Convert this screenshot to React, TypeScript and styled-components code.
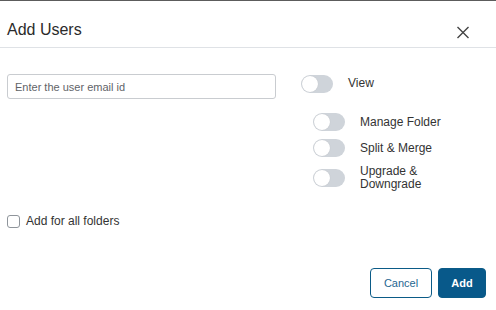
import React from "react";
import styled, { createGlobalStyle } from "styled-components";

const Global = createGlobalStyle`
  html, body { margin: 0; padding: 0; background: #fff; }
  body { font-family: "Liberation Sans", Arial, sans-serif; color: #333; }
  * { box-sizing: border-box; }
`;

const Modal = styled.div`
  width: 496px;
  height: 310px;
  border-top: 1px solid #5c5c5c;
  background: #fff;
  display: flex;
  flex-direction: column;
`;

const Header = styled.div`
  display: flex;
  align-items: flex-start;
  justify-content: space-between;
  padding: 19px 26px 7px 7px;
  border-bottom: 1px solid #dfe2e6;
`;

const Title = styled.h2`
  margin: 0;
  font-size: 16px;
  line-height: 20px;
  font-weight: 400;
  color: #2b2b2b;
`;

const CloseButton = styled.button`
  border: 0;
  background: none;
  padding: 0;
  margin-top: 6px;
  width: 14px;
  height: 13px;
  display: flex;
  cursor: pointer;
`;

const Body = styled.div`
  padding: 26px 10px 0 7px;
  display: flex;
  flex-direction: column;
`;

const TopRow = styled.div`
  display: flex;
  align-items: flex-start;
  gap: 25px;
`;

const EmailInput = styled.input`
  width: 269px;
  height: 25px;
  border: 1px solid #c9ccd0;
  border-radius: 3px;
  padding: 0 7px;
  font-family: inherit;
  font-size: 11px;
  color: #333;
  outline: none;
  &::placeholder { color: #5f6368; }
`;

const Permissions = styled.div`
  display: flex;
  flex-direction: column;
  margin-top: 1px;
`;

const SubList = styled.div`
  display: flex;
  flex-direction: column;
  gap: 8px;
  margin-top: 20px;
  padding-left: 12px;
`;

const ToggleRow = styled.label`
  display: flex;
  align-items: center;
  gap: 15px;
  min-height: 18px;
`;

const Track = styled.span`
  position: relative;
  flex: none;
  width: 32px;
  height: 18px;
  border-radius: 9px;
  background: #cfd4da;
`;

const Knob = styled.span`
  position: absolute;
  left: 1px;
  top: 1px;
  width: 16px;
  height: 16px;
  border-radius: 50%;
  background: #fff;
  box-shadow: 0 0 1px rgba(0, 0, 0, 0.15);
`;

const ToggleText = styled.span<{ $up?: boolean }>`
  font-size: 12px;
  line-height: 13px;
  color: #333;
  width: 90px;
  margin-top: ${(p) => (p.$up ? "-1px" : "0")};
`;

const CheckRow = styled.label`
  display: flex;
  align-items: center;
  gap: 6px;
  margin-top: 23px;
  height: 14px;
`;

const Box = styled.span`
  width: 13px;
  height: 13px;
  border: 1px solid #8f959b;
  border-radius: 3px;
  background: #fff;
`;

const CheckText = styled.span`
  font-size: 12px;
  color: #333;
`;

const Footer = styled.div`
  display: flex;
  justify-content: flex-end;
  gap: 6px;
  padding: 0 10px 0 0;
  margin-top: 40px;
`;

const Button = styled.button<{ $primary?: boolean }>`
  height: 30px;
  padding: 0;
  width: ${(p) => (p.$primary ? "48px" : "62px")};
  border-radius: 4px;
  font-family: inherit;
  font-size: 11px;
  font-weight: ${(p) => (p.$primary ? 700 : 400)};
  border: 1px solid #0b5b87;
  background: ${(p) => (p.$primary ? "#08598a" : "#fff")};
  color: ${(p) => (p.$primary ? "#fff" : "#1f6690")};
  cursor: pointer;
`;

const Toggle: React.FC<{ label: string; up?: boolean }> = ({ label, up }) => (
  <ToggleRow>
    <Track>
      <Knob />
    </Track>
    <ToggleText $up={up}>{label}</ToggleText>
  </ToggleRow>
);

export default function App() {
  return (
    <>
      <Global />
      <Modal>
        <Header>
          <Title>Add Users</Title>
          <CloseButton aria-label="Close">
            <svg width="14" height="13" viewBox="0 0 14 13">
              <path d="M1.5 1 L12.5 12 M12.5 1 L1.5 12" stroke="#444" strokeWidth="1.4" fill="none" />
            </svg>
          </CloseButton>
        </Header>
        <Body>
          <TopRow>
            <EmailInput placeholder="Enter the user email id" />
            <Permissions>
              <Toggle label="View" up />
              <SubList>
                <Toggle label="Manage Folder" />
                <Toggle label="Split & Merge" />
                <Toggle label="Upgrade & Downgrade" />
              </SubList>
            </Permissions>
          </TopRow>
          <CheckRow>
            <Box />
            <CheckText>Add for all folders</CheckText>
          </CheckRow>
        </Body>
        <Footer>
          <Button>Cancel</Button>
          <Button $primary>Add</Button>
        </Footer>
      </Modal>
    </>
  );
}
